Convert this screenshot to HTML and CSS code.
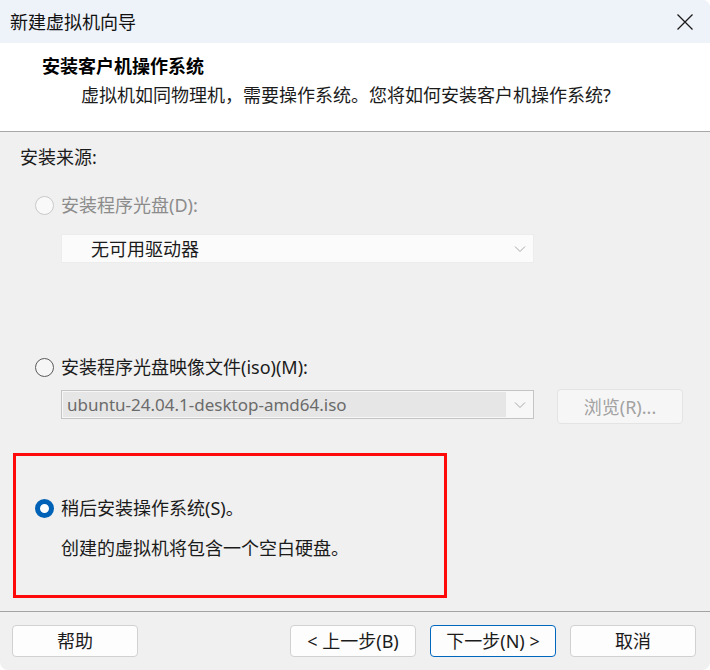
FILE: index.html
```html
<!DOCTYPE html>
<html lang="zh-CN">
<head>
<meta charset="utf-8">
<title>新建虚拟机向导</title>
<link rel="stylesheet" href="styles.css">
</head>
<body>
<div class="window">
  <div class="titlebar">
    <span class="title">新建虚拟机向导</span>
    <svg class="close" width="16" height="16" viewBox="0 0 16 16"><path d="M0.5 0.5 L15.5 15.5 M15.5 0.5 L0.5 15.5" stroke="#1a1a1a" stroke-width="1.3" fill="none"/></svg>
  </div>
  <div class="header">
    <div class="h-title">安装客户机操作系统</div>
    <div class="h-sub">虚拟机如同物理机，需要操作系统。您将如何安装客户机操作系统?</div>
  </div>
  <div class="content">
    <div class="label">安装来源:</div>
    <div class="radio-row row1 disabled">
      <span class="radio"></span>
      <span>安装程序光盘(D):</span>
    </div>
    <div class="select sel1">
      <span class="sel-text">无可用驱动器</span>
      <svg class="chev" width="12" height="8" viewBox="0 0 12 8"><path d="M1 1.5 L6 6.5 L11 1.5" stroke="#a8a8a8" stroke-width="1" fill="none"/></svg>
    </div>
    <div class="radio-row row2">
      <span class="radio"></span>
      <span>安装程序光盘映像文件(iso)(M):</span>
    </div>
    <div class="iso-row">
      <div class="select sel2">
        <span class="sel-inner">ubuntu-24.04.1-desktop-amd64.iso</span>
        <svg class="chev" width="12" height="8" viewBox="0 0 12 8"><path d="M1 1.5 L6 6.5 L11 1.5" stroke="#a8a8a8" stroke-width="1" fill="none"/></svg>
      </div>
      <div class="browse">浏览(R)...</div>
    </div>
    <div class="redbox">
      <div class="radio-row row3">
        <span class="radio checked"></span>
        <span>稍后安装操作系统(S)。</span>
      </div>
      <div class="desc">创建的虚拟机将包含一个空白硬盘。</div>
    </div>
  </div>
  <div class="footer">
    <button class="btn help">帮助</button>
    <span class="spacer"></span>
    <button class="btn">&lt; 上一步(B)</button>
    <button class="btn primary">下一步(N) &gt;</button>
    <button class="btn">取消</button>
  </div>
</div>
</body>
</html>
```

FILE: styles.css
```css
* { box-sizing: border-box; }
html, body { margin: 0; padding: 0; background: #ffffff; }
body {
  font-family: "Noto Sans", "Noto Sans CJK SC", sans-serif;
  font-size: 18px;
  color: #1b1b1b;
}
.window {
  width: 710px;
  height: 670px;
  background: #f0f0f0;
  border-radius: 0 8px 8px 8px;
  overflow: hidden;
  display: flex;
  flex-direction: column;
}
.titlebar {
  height: 43px;
  background: #eef2f9;
  display: flex;
  align-items: center;
  justify-content: space-between;
  padding: 0 17px 0 10px;
}
.title { line-height: 24px; color: #111; }
.close { display: block; }
.header {
  height: 89px;
  background: #ffffff;
  border-bottom: 1px solid #a8a8a8;
  padding-top: 11px;
}
.h-title {
  padding-left: 42px;
  line-height: 24px;
  font-weight: 700;
  color: #000;
}
.h-sub {
  padding-left: 81px;
  margin-top: 5px;
  line-height: 24px;
  color: #1b1b1b;
}
.content {
  flex: 1;
  display: flex;
  flex-direction: column;
}
.label {
  margin: 13px 0 0 20px;
  line-height: 24px;
}
.radio-row {
  display: flex;
  align-items: center;
  gap: 7px;
  line-height: 24px;
  margin-left: 35px;
}
.radio {
  width: 19px;
  height: 19px;
  border-radius: 50%;
  border: 1px solid #5a5a5a;
  background: #f6f6f6;
  flex: none;
}
.disabled { color: #8c8c8c; }
.disabled .radio { border-color: #c9c9c9; background: #f9f9f9; }
.radio.checked {
  border: 5.5px solid #0062b6;
  background: #ffffff;
}
.row1 { margin-top: 24px; }
.select {
  margin-left: 61px;
  width: 473px;
  height: 29px;
  display: flex;
  align-items: center;
  justify-content: space-between;
  padding-right: 7px;
}
.sel1 {
  margin-top: 17px;
  background: #fbfbfb;
  border: 1px solid #ececec;
  padding-left: 29px;
}
.sel-text { line-height: 24px; color: #1b1b1b; }
.row2 { margin-top: 92px; }
.iso-row {
  margin-top: 10px;
  display: flex;
  align-items: flex-start;
  gap: 23px;
  height: 35px;
}
.sel2 {
  margin-top: 1px;
  background: #f7f7f7;
  border: 1px solid #c4c4c4;
  padding: 1px 7px 1px 1px;
}
.sel-inner {
  width: 443px;
  height: 25px;
  background: #e6e6e6;
  color: #6b6b6b;
  font-size: 17px;
  line-height: 25px;
  padding-left: 4px;
  white-space: nowrap;
  overflow: hidden;
}
.chev { display: block; flex: none; }
.browse {
  width: 126px;
  height: 35px;
  background: #f6f6f6;
  border: 1px solid #e4e4e4;
  border-radius: 4px;
  color: #a2a2a2;
  display: flex;
  align-items: center;
  justify-content: center;
  line-height: 24px;
}
.redbox {
  margin: 29px 0 0 13px;
  width: 434px;
  height: 145px;
  border: 3px solid #ff0a0a;
  padding-top: 40px;
}
.row3 { margin-left: 19px; }
.desc {
  margin: 16px 0 0 45px;
  line-height: 24px;
}
.footer {
  height: 59px;
  border-top: 1px solid #a3a3a3;
  display: flex;
  align-items: flex-start;
  padding: 13px 14px 0 12px;
  gap: 14px;
}
.spacer { flex: 1; }
.btn {
  width: 126px;
  height: 32px;
  background: #fdfdfd;
  border: 1px solid #d1d1d1;
  border-radius: 4px;
  font-family: inherit;
  font-size: 18px;
  color: #1b1b1b;
  line-height: 24px;
  padding: 0;
}
.btn.primary { border-color: #0067c0; }
```
